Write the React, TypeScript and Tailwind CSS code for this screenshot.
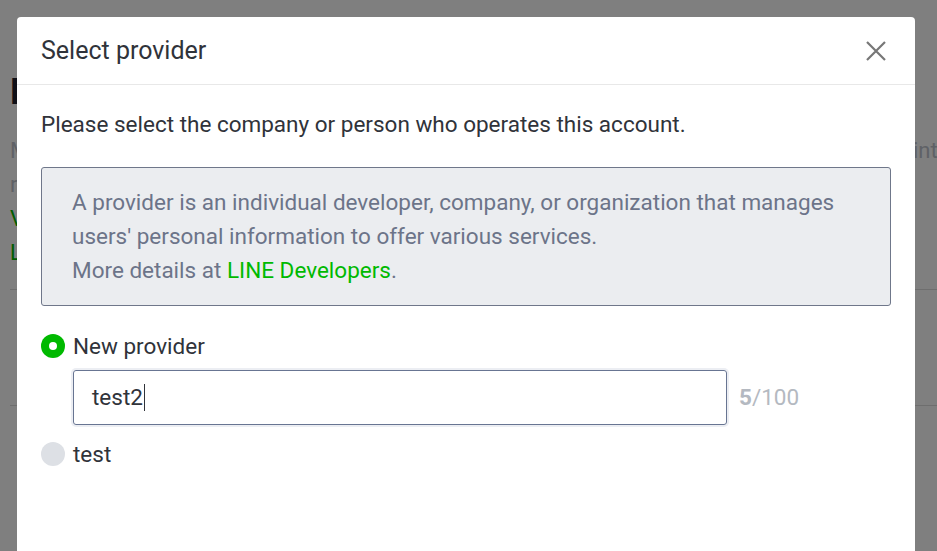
function Radio({ checked }: { checked?: boolean }) {
  return checked ? (
    <span className="flex h-6 w-6 shrink-0 items-center justify-center rounded-full bg-[#00b900]">
      <span className="h-2 w-2 rounded-full bg-white" />
    </span>
  ) : (
    <span className="h-6 w-6 shrink-0 rounded-full bg-[#dde0e5]" />
  )
}

function CloseIcon() {
  return (
    <svg width="20" height="20" viewBox="0 0 20 20" className="text-[#777]">
      <path d="M1 1 L19 19 M19 1 L1 19" stroke="currentColor" strokeWidth="2.2" strokeLinecap="butt" />
    </svg>
  )
}

// page behind the dimmed overlay, only its edges show
function Backdrop() {
  return (
    <div className="h-full w-full bg-white pl-[10px] pt-[72px] text-[22px] text-[#bfc3cc]">
      <h1 className="text-[36px] leading-[40px] font-bold text-[#1e1e2e]">P</h1>
      <div className="mt-[22px] flex justify-between leading-[34px]">
        <span>M</span>
        <span className="-mr-[13px]">into</span>
      </div>
      <p className="leading-[34px]">r</p>
      <p className="leading-[34px] text-[#00b900]">V</p>
      <p className="leading-[34px] text-[#00b900]">L</p>
      <div className="mt-[19px] border-t border-[#dcdcdc]" />
      <div className="h-[115px]" />
      <div className="border-t border-[#dcdcdc]" />
    </div>
  )
}

export default function App() {
  return (
    <div className="relative h-[551px] w-[937px] overflow-hidden font-['Roboto',sans-serif]">
      <Backdrop />
      <div className="absolute inset-0 bg-black/50" />

      <div className="absolute left-[17px] top-[17px] h-[560px] w-[898px] rounded-[4px] bg-white">
        <div className="flex h-[68px] items-center justify-between border-b border-[#e8e8e8] pl-[24px] pr-[29px]">
          <h2 className="text-[25px] text-[#30333a]">Select provider</h2>
          <CloseIcon />
        </div>

        <div className="px-[24px] pt-[24px] text-[22.5px]">
          <p className="leading-[30px] text-[#30333a]">
            Please select the company or person who operates this account.
          </p>

          <div className="mt-[28px] rounded-[3px] border border-[#6f778a] bg-[#ebedf0] px-[30px] pt-[17px] pb-[18px] leading-[34px] text-[#6c7489]">
            A provider is an individual developer, company, or organization that manages
            <br />
            users' personal information to offer various services.
            <br />
            More details at <span className="text-[#00b900]">LINE Developers</span>.
          </div>

          <div className="mt-[25px] flex items-center gap-[8px]">
            <Radio checked />
            <span className="leading-[30px] text-[#30333a]">New provider</span>
          </div>

          <div className="mt-[9px] flex items-center gap-[12px] pl-[32px]">
            <div className="h-[55px] w-[654px] rounded-[3px] ring-2 ring-[#eceef3]">
              <div className="flex h-full items-center rounded-[3px] border border-[#687592] px-[18px] text-[#30333a]">
                test2
                <span className="ml-[1px] h-[27px] w-[1px] bg-[#30333a]" />
              </div>
            </div>
            <span className="text-[#b4b9c1]">
              <span className="font-bold">5</span>/100
            </span>
          </div>

          <div className="mt-[14px] flex items-center gap-[8px]">
            <Radio />
            <span className="leading-[30px] text-[#30333a]">test</span>
          </div>
        </div>
      </div>
    </div>
  )
}
